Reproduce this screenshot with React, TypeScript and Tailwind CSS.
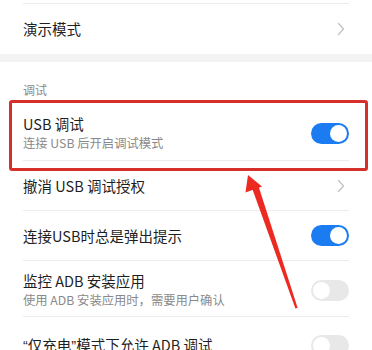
import React from 'react';

interface Item {
  title: React.ReactNode;
  sub?: string;
  kind: 'chevron' | 'on' | 'off';
}

const Chevron = () => (
  <svg width="8" height="14" viewBox="0 0 8 14" className="shrink-0 mr-[4px]">
    <path d="M1.5 1.5 L6.5 7 L1.5 12.5" fill="none" stroke="#c4c4c4" strokeWidth="1.4" strokeLinecap="round" strokeLinejoin="round" />
  </svg>
);

const Toggle = ({ on }: { on: boolean }) => (
  <div
    className={`shrink-0 w-[38px] h-[21px] rounded-full flex items-center px-[2px] ${
      on ? 'bg-[#1a7cf0] justify-end' : 'bg-[#e8e8e8] justify-start'
    }`}
  >
    <div className="w-[17px] h-[17px] rounded-full bg-white" />
  </div>
);

const Row = ({ item, divider = true }: { item: Item; divider?: boolean }) => (
  <div className={`mx-[23px] flex items-center justify-between ${divider ? 'border-b border-[#ececec]' : ''} ${item.sub ? 'pt-[10px] pb-[6px]' : 'h-[50px]'}`}>
    <div className="flex flex-col">
      <span className="text-[14.5px] leading-[20px] text-[#1f1f1f]">{item.title}</span>
      {item.sub && <span className="text-[12.3px] leading-[19px] text-[#8a8a8a]">{item.sub}</span>}
    </div>
    {item.kind === 'chevron' ? <Chevron /> : <Toggle on={item.kind === 'on'} />}
  </div>
);

const Q = ({ children }: { children: React.ReactNode }) => (
  <span className="font-['Liberation_Sans',sans-serif]">{children}</span>
);

export default function App() {
  return (
    <div className="relative w-[372px] h-[350px] overflow-hidden bg-white font-['Noto_Sans_CJK_SC',sans-serif]">
      <div className="h-[4px] mx-[23px] border-b border-[#ececec]" />
      <Row item={{ title: '演示模式', kind: 'chevron' }} divider={false} />
      <div className="h-[8px] bg-[#f3f3f3]" />
      <div className="mx-[23px] pt-[22px] text-[12px] leading-[12px] text-[#8a8a8a] h-[38px]">
        调试
      </div>
      <div className="mx-[23px] flex items-center justify-between border-b border-[#ececec] pt-[14px] pb-[8px]">
        <div className="flex flex-col">
          <span className="text-[14.5px] leading-[20px] text-[#1f1f1f]">USB 调试</span>
          <span className="text-[12.3px] leading-[18px] text-[#8a8a8a]">连接 USB 后开启调试模式</span>
        </div>
        <Toggle on />
      </div>
      <Row item={{ title: '撤消 USB 调试授权', kind: 'chevron' }} />
      <Row item={{ title: '连接USB时总是弹出提示', kind: 'on' }} />
      <Row item={{ title: '监控 ADB 安装应用', sub: '使用 ADB 安装应用时，需要用户确认', kind: 'off' }} />
      <div className="pt-[3px]">
        <Row
          item={{
            title: (
              <>
                <Q>“</Q>仅充电<Q>”</Q>模式下允许 ADB 调试
              </>
            ),
            kind: 'off',
          }}
          divider={false}
        />
      </div>

      {/* annotation overlay */}
      <div className="absolute left-[9px] top-[100px] w-[359px] h-[71px] border-[3px] border-[#d6302c] rounded-[3px] pointer-events-none" />
      <svg className="absolute left-0 top-0 pointer-events-none" width="372" height="350" viewBox="0 0 372 350">
        <polygon points="248,175 245.5,192.5 262,186.5" fill="#ec2a22" />
        <polygon points="251.8,187.5 258.2,185.2 297.6,307.8 295.4,308.4" fill="#ec2a22" />
      </svg>
    </div>
  );
}
